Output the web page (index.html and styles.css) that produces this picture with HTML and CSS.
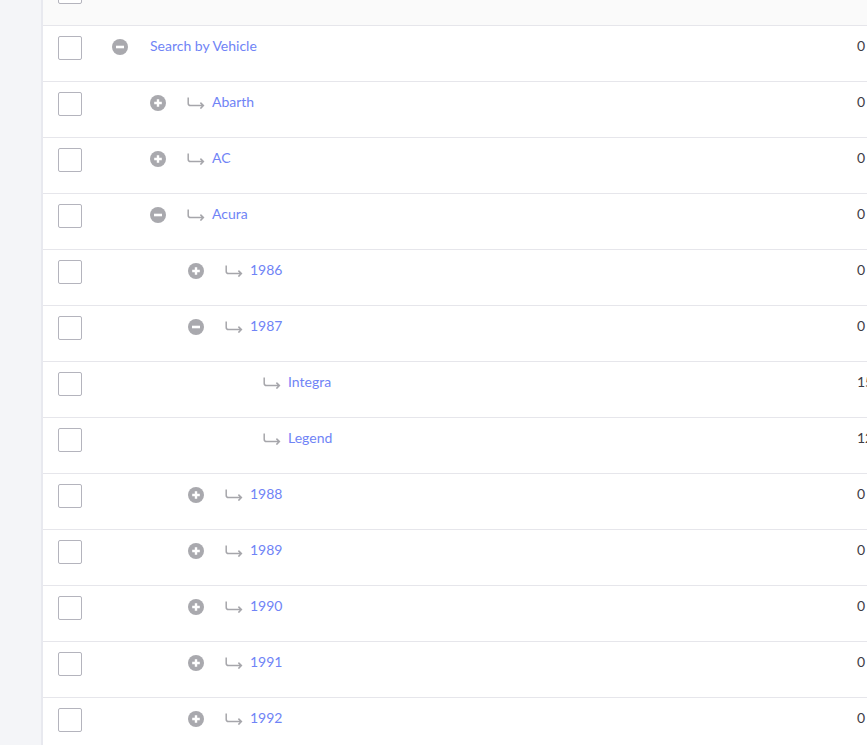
FILE: index.html
```html
<!DOCTYPE html>
<html>
<head>
<meta charset="utf-8">
<link rel="stylesheet" href="styles.css">
</head>
<body>
<svg width="0" height="0" class="defs">
  <defs>
    <symbol id="plus" viewBox="0 0 16 16"><circle cx="8" cy="8" r="8" fill="#a9a9ae"/><path d="M8 4.2v7.6M4.2 8h7.6" stroke="#fff" stroke-width="2.4"/></symbol>
    <symbol id="minus" viewBox="0 0 16 16"><circle cx="8" cy="8" r="8" fill="#a9a9ae"/><path d="M4 8h8" stroke="#fff" stroke-width="2.6"/></symbol>
    <symbol id="arrow" viewBox="0 0 18 12"><path d="M1.2 0.5V6.2Q1.2 8.6 3.6 8.6H16.4M13.4 5.6L16.4 8.6L13.4 11.6" fill="none" stroke="#a6a6ab" stroke-width="1.5"/></symbol>
  </defs>
</svg>
<div class="layout">
  <aside class="sidebar"></aside>
  <main class="main">
    <div class="list">
      <div class="row row--head"><span class="check"></span><div class="tree"></div><div class="num"></div></div>
      <div class="row"><span class="check"></span><div class="tree l0"><svg class="tog"><use href="#minus"/></svg><a class="name">Search by Vehicle</a></div><div class="num">0</div></div>
      <div class="row"><span class="check"></span><div class="tree l1"><svg class="tog"><use href="#plus"/></svg><svg class="arr"><use href="#arrow"/></svg><a class="name">Abarth</a></div><div class="num">0</div></div>
      <div class="row"><span class="check"></span><div class="tree l1"><svg class="tog"><use href="#plus"/></svg><svg class="arr"><use href="#arrow"/></svg><a class="name">AC</a></div><div class="num">0</div></div>
      <div class="row"><span class="check"></span><div class="tree l1"><svg class="tog"><use href="#minus"/></svg><svg class="arr"><use href="#arrow"/></svg><a class="name">Acura</a></div><div class="num">0</div></div>
      <div class="row"><span class="check"></span><div class="tree l2"><svg class="tog"><use href="#plus"/></svg><svg class="arr"><use href="#arrow"/></svg><a class="name">1986</a></div><div class="num">0</div></div>
      <div class="row"><span class="check"></span><div class="tree l2"><svg class="tog"><use href="#minus"/></svg><svg class="arr"><use href="#arrow"/></svg><a class="name">1987</a></div><div class="num">0</div></div>
      <div class="row"><span class="check"></span><div class="tree l3"><span class="tog"></span><svg class="arr"><use href="#arrow"/></svg><a class="name">Integra</a></div><div class="num">15</div></div>
      <div class="row"><span class="check"></span><div class="tree l3"><span class="tog"></span><svg class="arr"><use href="#arrow"/></svg><a class="name">Legend</a></div><div class="num">12</div></div>
      <div class="row"><span class="check"></span><div class="tree l2"><svg class="tog"><use href="#plus"/></svg><svg class="arr"><use href="#arrow"/></svg><a class="name">1988</a></div><div class="num">0</div></div>
      <div class="row"><span class="check"></span><div class="tree l2"><svg class="tog"><use href="#plus"/></svg><svg class="arr"><use href="#arrow"/></svg><a class="name">1989</a></div><div class="num">0</div></div>
      <div class="row"><span class="check"></span><div class="tree l2"><svg class="tog"><use href="#plus"/></svg><svg class="arr"><use href="#arrow"/></svg><a class="name">1990</a></div><div class="num">0</div></div>
      <div class="row"><span class="check"></span><div class="tree l2"><svg class="tog"><use href="#plus"/></svg><svg class="arr"><use href="#arrow"/></svg><a class="name">1991</a></div><div class="num">0</div></div>
      <div class="row"><span class="check"></span><div class="tree l2"><svg class="tog"><use href="#plus"/></svg><svg class="arr"><use href="#arrow"/></svg><a class="name">1992</a></div><div class="num">0</div></div>
    </div>
  </main>
</div>
</body>
</html>
```
FILE: styles.css
```css
html, body {
  margin: 0;
  padding: 0;
  height: 100%;
  overflow: hidden;
  background: #fff;
  font-family: "Lato", "Open Sans", sans-serif;
  font-size: 14px;
}
.defs { position: absolute; width: 0; height: 0; }
.layout {
  display: flex;
  height: 745px;
}
.sidebar {
  width: 41px;
  flex: none;
  background: #f4f5f8;
  border-right: 2px solid #e8e9ef;
}
.main {
  flex: 1;
  overflow: hidden;
}
.list {
  margin-top: -30px;
}
.row {
  display: flex;
  align-items: flex-start;
  height: 45px;
  padding-top: 10px;
  border-bottom: 1px solid #e6e6eb;
}
.row--head { background: #fafafa; }
.check {
  flex: none;
  width: 22px;
  height: 22px;
  margin-left: 15px;
  border: 1px solid #b4b4bd;
  border-radius: 2px;
  background: #fff;
}
.tree {
  flex: 1;
  display: flex;
  align-items: flex-start;
  padding-left: 30px;
}
.tree.l1 { padding-left: 68px; }
.tree.l2 { padding-left: 106px; }
.tree.l3 { padding-left: 144px; }
.tog {
  flex: none;
  width: 16px;
  height: 16px;
  margin-top: 3px;
  margin-right: 21px;
}
.l0 .tog { margin-right: 22px; }
.arr {
  flex: none;
  width: 18px;
  height: 12px;
  margin-top: 5px;
  margin-right: 7px;
}
.name {
  color: #7084f6;
  line-height: 20px;
  cursor: pointer;
}
.num {
  flex: none;
  width: 10px;
  white-space: nowrap;
  line-height: 20px;
  color: #3d3d45;
}
```
